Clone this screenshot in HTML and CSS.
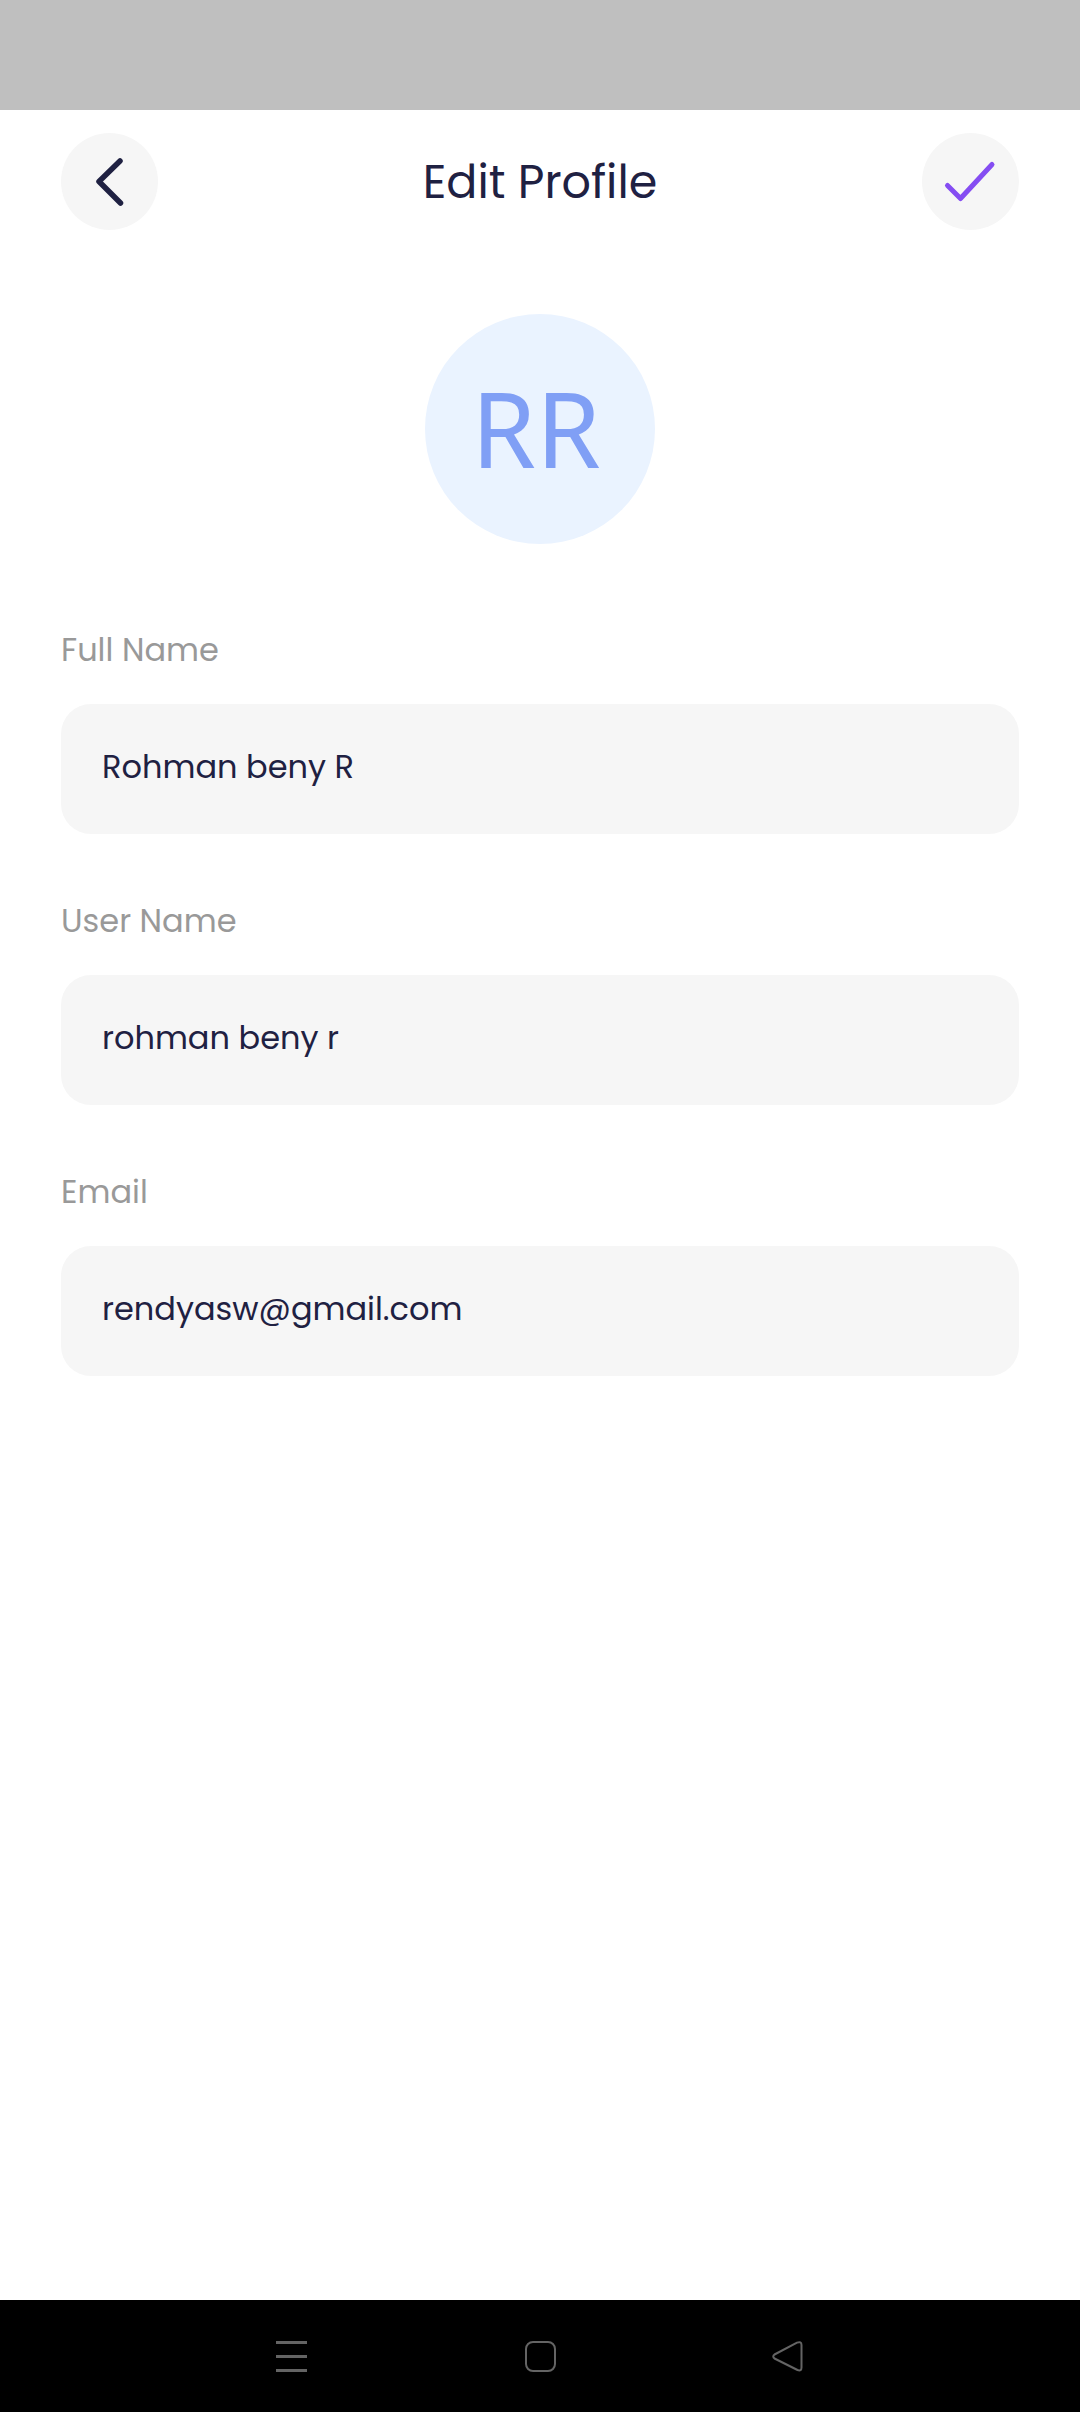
FILE: index.html
```html
<!DOCTYPE html>
<html lang="en">
<head>
  <meta charset="utf-8">
  <meta name="viewport" content="width=device-width, initial-scale=1">
  <title>Edit Profile</title>
  <link rel="stylesheet" href="styles.css">
</head>
<body>
  <div class="status-bar"></div>
  <header class="header">
    <button class="round-button" type="button" aria-label="Back">
      <svg class="round-icon" viewBox="0 0 97 97" fill="none" stroke="#1f2142" stroke-width="5.500" stroke-linecap="round" stroke-linejoin="round">
        <path d="M59 28L38 48.500L59.500 70"/>
      </svg>
    </button>
    <h1 class="title">Edit Profile</h1>
    <button class="round-button" type="submit" form="profile" aria-label="Save">
      <svg class="round-icon" viewBox="0 0 97 97" fill="none" stroke="#854df2" stroke-width="5" stroke-linecap="round" stroke-linejoin="round">
        <path d="M25.500 52.500L38.500 65.500L70 31.500"/>
      </svg>
    </button>
  </header>
  <main class="content">
    <div class="avatar">RR</div>
    <form class="form" id="profile">
      <div class="field">
        <label class="label" for="full-name">Full Name</label>
        <input class="input" id="full-name" type="text" value="Rohman beny R">
      </div>
      <div class="field">
        <label class="label" for="user-name">User Name</label>
        <input class="input" id="user-name" type="text" value="rohman beny r">
      </div>
      <div class="field">
        <label class="label" for="email">Email</label>
        <input class="input" id="email" type="email" value="rendyasw@gmail.com">
      </div>
    </form>
  </main>
  <nav class="nav-bar" aria-label="System">
    <button class="nav-button" type="button" aria-label="Recent apps">
      <svg class="nav-icon" viewBox="0 0 32 32" fill="#646464">
        <path d="M0 1h31v3H0zM0 15h31v3H0zM0 29h31v3H0z"/>
      </svg>
    </button>
    <button class="nav-button" type="button" aria-label="Home">
      <svg class="nav-icon" viewBox="0 0 32 32" fill="none" stroke="#646464" stroke-width="2">
        <rect x="2" y="2" width="29" height="29" rx="7"/>
      </svg>
    </button>
    <button class="nav-button" type="button" aria-label="Back">
      <svg class="nav-icon" viewBox="0 0 32 32" fill="none" stroke="#646464" stroke-width="2" stroke-linejoin="round">
        <path d="M2.500 14.500L25 2.600Q29.500 1 29.500 5V27.500Q29.500 31.500 25.500 30L2.500 18.500Q0 16.500 2.500 14.500Z"/>
      </svg>
    </button>
  </nav>
</body>
</html>
```
FILE: styles.css
```css
* {
  box-sizing: border-box;
}

body {
  display: flex;
  flex-direction: column;
  min-height: 100vh;
  margin: 0;
  background: #fff;
  color: #1f2142;
  font-family: Poppins, Inter, sans-serif;
}

button {
  padding: 0;
  border: 0;
  cursor: pointer;
}

.status-bar {
  height: 110px;
  background: #bfbfbf;
}

.header {
  display: flex;
  align-items: center;
  justify-content: space-between;
  padding: 23px 61px 0;
}

.round-button {
  width: 97px;
  height: 97px;
  border-radius: 50%;
  background: #f6f6f6;
}

.round-icon {
  display: block;
  width: 100%;
  height: 100%;
}

.title {
  margin: 0;
  font-size: 46px;
  font-weight: 400;
  line-height: 60px;
}

.content {
  flex: 1;
  padding: 84px 61px 61px;
}

.avatar {
  display: flex;
  align-items: center;
  justify-content: center;
  width: 230px;
  height: 230px;
  margin: 0 auto;
  padding: 0 8px 4px 0;
  border-radius: 50%;
  background: #eaf3ff;
  color: #809ff5;
  font-family: "Noto Sans", sans-serif;
  font-size: 104px;
}

.form {
  display: flex;
  flex-direction: column;
  gap: 62px;
  margin-top: 81px;
}

.field {
  display: flex;
  flex-direction: column;
  gap: 29px;
}

.label {
  color: #999;
  font-size: 32px;
  line-height: 50px;
}

.input {
  width: 100%;
  height: 130px;
  padding: 0 41px 4px;
  border: 0;
  border-radius: 30px;
  background: #f6f6f6;
  color: inherit;
  font-family: inherit;
  font-size: 32px;
}

.nav-bar {
  display: grid;
  grid-template-columns: repeat(3, 23%);
  justify-content: center;
  height: 112px;
  background: #000;
}

.nav-button {
  display: grid;
  place-items: center;
  background: transparent;
}

.nav-icon {
  width: 32px;
  height: 32px;
}
```
